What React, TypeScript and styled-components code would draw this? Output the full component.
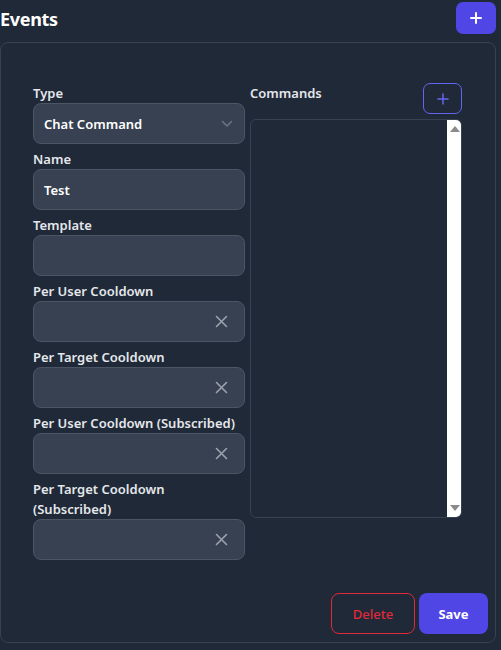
import React from "react";
import styled, { createGlobalStyle } from "styled-components";

const COLORS = {
  bg: "#1f2937",
  border: "#374151",
  field: "#374151",
  fieldBorder: "#4b5563",
  text: "#f3f4f6",
  label: "#e5e7eb",
  muted: "#9ca3af",
  indigo: "#4f46e5",
  indigoLight: "#6366f1",
  red: "#e02a3a",
};

const GlobalStyle = createGlobalStyle`
  html, body {
    margin: 0;
    padding: 0;
    background: ${COLORS.bg};
  }
  body {
    font-family: "Noto Sans", Arial, sans-serif;
    color: ${COLORS.text};
  }
  * { box-sizing: border-box; }
`;

const Page = styled.div`
  width: 501px;
  height: 650px;
  padding-right: 5px;
  display: flex;
  flex-direction: column;
`;

const Header = styled.div`
  height: 42px;
  display: flex;
  justify-content: space-between;
  align-items: flex-start;
`;

const Title = styled.h1`
  margin: 6px 0 0;
  font-size: 18px;
  line-height: 26px;
  font-weight: 700;
  color: #fff;
  letter-spacing: -0.3px;
`;

const AddButton = styled.button`
  margin-top: 2px;
  width: 40px;
  height: 32px;
  border: none;
  border-radius: 7px;
  background: ${COLORS.indigo};
  display: flex;
  align-items: center;
  justify-content: center;
  cursor: pointer;
  padding: 0;
`;

const Card = styled.div`
  height: 601px;
  border: 1px solid ${COLORS.border};
  border-radius: 8px;
  display: flex;
  flex-direction: column;
`;

const Form = styled.div`
  flex: 1;
  padding: 40px 32px 0;
  display: grid;
  grid-template-columns: 212px 212px;
  column-gap: 5px;
  align-items: start;
`;

const Column = styled.div`
  display: flex;
  flex-direction: column;
  gap: 5px;
`;

const Field = styled.div`
  display: flex;
  flex-direction: column;
`;

const Label = styled.label`
  font-size: 13px;
  line-height: 20px;
  font-weight: 600;
  color: ${COLORS.label};
`;

const InputBox = styled.div`
  height: 41px;
  border: 1px solid ${COLORS.fieldBorder};
  border-radius: 8px;
  background: ${COLORS.field};
  display: flex;
  align-items: center;
  padding: 0 11px 0 10px;
  font-size: 13px;
  font-weight: 600;
  color: #fff;
`;

const Value = styled.span`
  flex: 1;
`;

const ClearSvg = styled.svg`
  margin-right: 5px;
`;

const CommandsHead = styled.div`
  display: flex;
  justify-content: space-between;
  align-items: flex-start;
  height: 31px;
`;

const OutlineButton = styled.button`
  width: 39px;
  height: 31px;
  border: 1px solid ${COLORS.indigoLight};
  border-radius: 7px;
  background: transparent;
  display: flex;
  align-items: center;
  justify-content: center;
  padding: 0;
  cursor: pointer;
`;

const CommandList = styled.div`
  height: 399px;
  border: 1px solid ${COLORS.border};
  border-radius: 6px;
  display: flex;
  justify-content: flex-end;
  overflow: hidden;
`;

const ScrollTrack = styled.div`
  width: 15px;
  margin-right: -1px;
  background: #fff;
  display: flex;
  flex-direction: column;
  justify-content: space-between;
  align-items: center;
  padding: 6px 0;
`;

const Arrow = styled.div<{ $down?: boolean }>`
  width: 0;
  height: 0;
  border-left: 5px solid transparent;
  border-right: 5px solid transparent;
  ${(p) =>
    p.$down
      ? `border-top: 6px solid #8a8a8a;`
      : `border-bottom: 6px solid #8a8a8a;`}
`;

const Footer = styled.div`
  display: flex;
  justify-content: flex-end;
  gap: 4px;
  padding: 0 7px 8px 0;
`;

const ActionButton = styled.button<{ $variant: "danger" | "primary" }>`
  height: 41px;
  border-radius: 8px;
  font-family: inherit;
  font-size: 13px;
  font-weight: ${(p) => (p.$variant === "primary" ? 700 : 500)};
  cursor: pointer;
  padding: 0;
  ${(p) =>
    p.$variant === "primary"
      ? `width: 69px; background: ${COLORS.indigo}; border: none; color: #fff;`
      : `width: 84px; background: transparent; border: 1px solid ${COLORS.red}; color: ${COLORS.red};`}
`;

const PlusIcon = ({ color, size, stroke }: { color: string; size: number; stroke: number }) => (
  <svg width={size} height={size} viewBox="0 0 12 12" fill="none">
    <path d="M6 1v10M1 6h10" stroke={color} strokeWidth={stroke} strokeLinecap="round" />
  </svg>
);

const ClearIcon = () => (
  <ClearSvg width="13" height="13" viewBox="0 0 13 13" fill="none">
    <path d="M1.5 1.5l10 10M11.5 1.5l-10 10" stroke={COLORS.muted} strokeWidth="1.6" strokeLinecap="round" />
  </ClearSvg>
);

const Chevron = () => (
  <svg width="12" height="8" viewBox="0 0 12 8" fill="none">
    <path d="M1.5 1.5L6 6l4.5-4.5" stroke="#6b7280" strokeWidth="1.6" strokeLinecap="round" strokeLinejoin="round" />
  </svg>
);

const fields = [
  { label: "Type", value: "Chat Command", kind: "select" },
  { label: "Name", value: "Test", kind: "text" },
  { label: "Template", value: "", kind: "text" },
  { label: "Per User Cooldown", value: "", kind: "clear" },
  { label: "Per Target Cooldown", value: "", kind: "clear" },
  { label: "Per User Cooldown (Subscribed)", value: "", kind: "clear" },
  { label: "Per Target Cooldown (Subscribed)", value: "", kind: "clear" },
];

export default function App() {
  return (
    <>
      <GlobalStyle />
      <Page>
        <Header>
          <Title>Events</Title>
          <AddButton>
            <PlusIcon color="#fff" size={12} stroke={2} />
          </AddButton>
        </Header>
        <Card>
          <Form>
            <Column>
              {fields.map((f) => (
                <Field key={f.label}>
                  <Label>{f.label}</Label>
                  <InputBox>
                    <Value>{f.value}</Value>
                    {f.kind === "select" && <Chevron />}
                    {f.kind === "clear" && <ClearIcon />}
                  </InputBox>
                </Field>
              ))}
            </Column>
            <Column>
              <CommandsHead>
                <Label>Commands</Label>
                <OutlineButton>
                  <PlusIcon color={COLORS.indigoLight} size={12} stroke={1.5} />
                </OutlineButton>
              </CommandsHead>
              <CommandList>
                <ScrollTrack>
                  <Arrow />
                  <Arrow $down />
                </ScrollTrack>
              </CommandList>
            </Column>
          </Form>
          <Footer>
            <ActionButton $variant="danger">Delete</ActionButton>
            <ActionButton $variant="primary">Save</ActionButton>
          </Footer>
        </Card>
      </Page>
    </>
  );
}
